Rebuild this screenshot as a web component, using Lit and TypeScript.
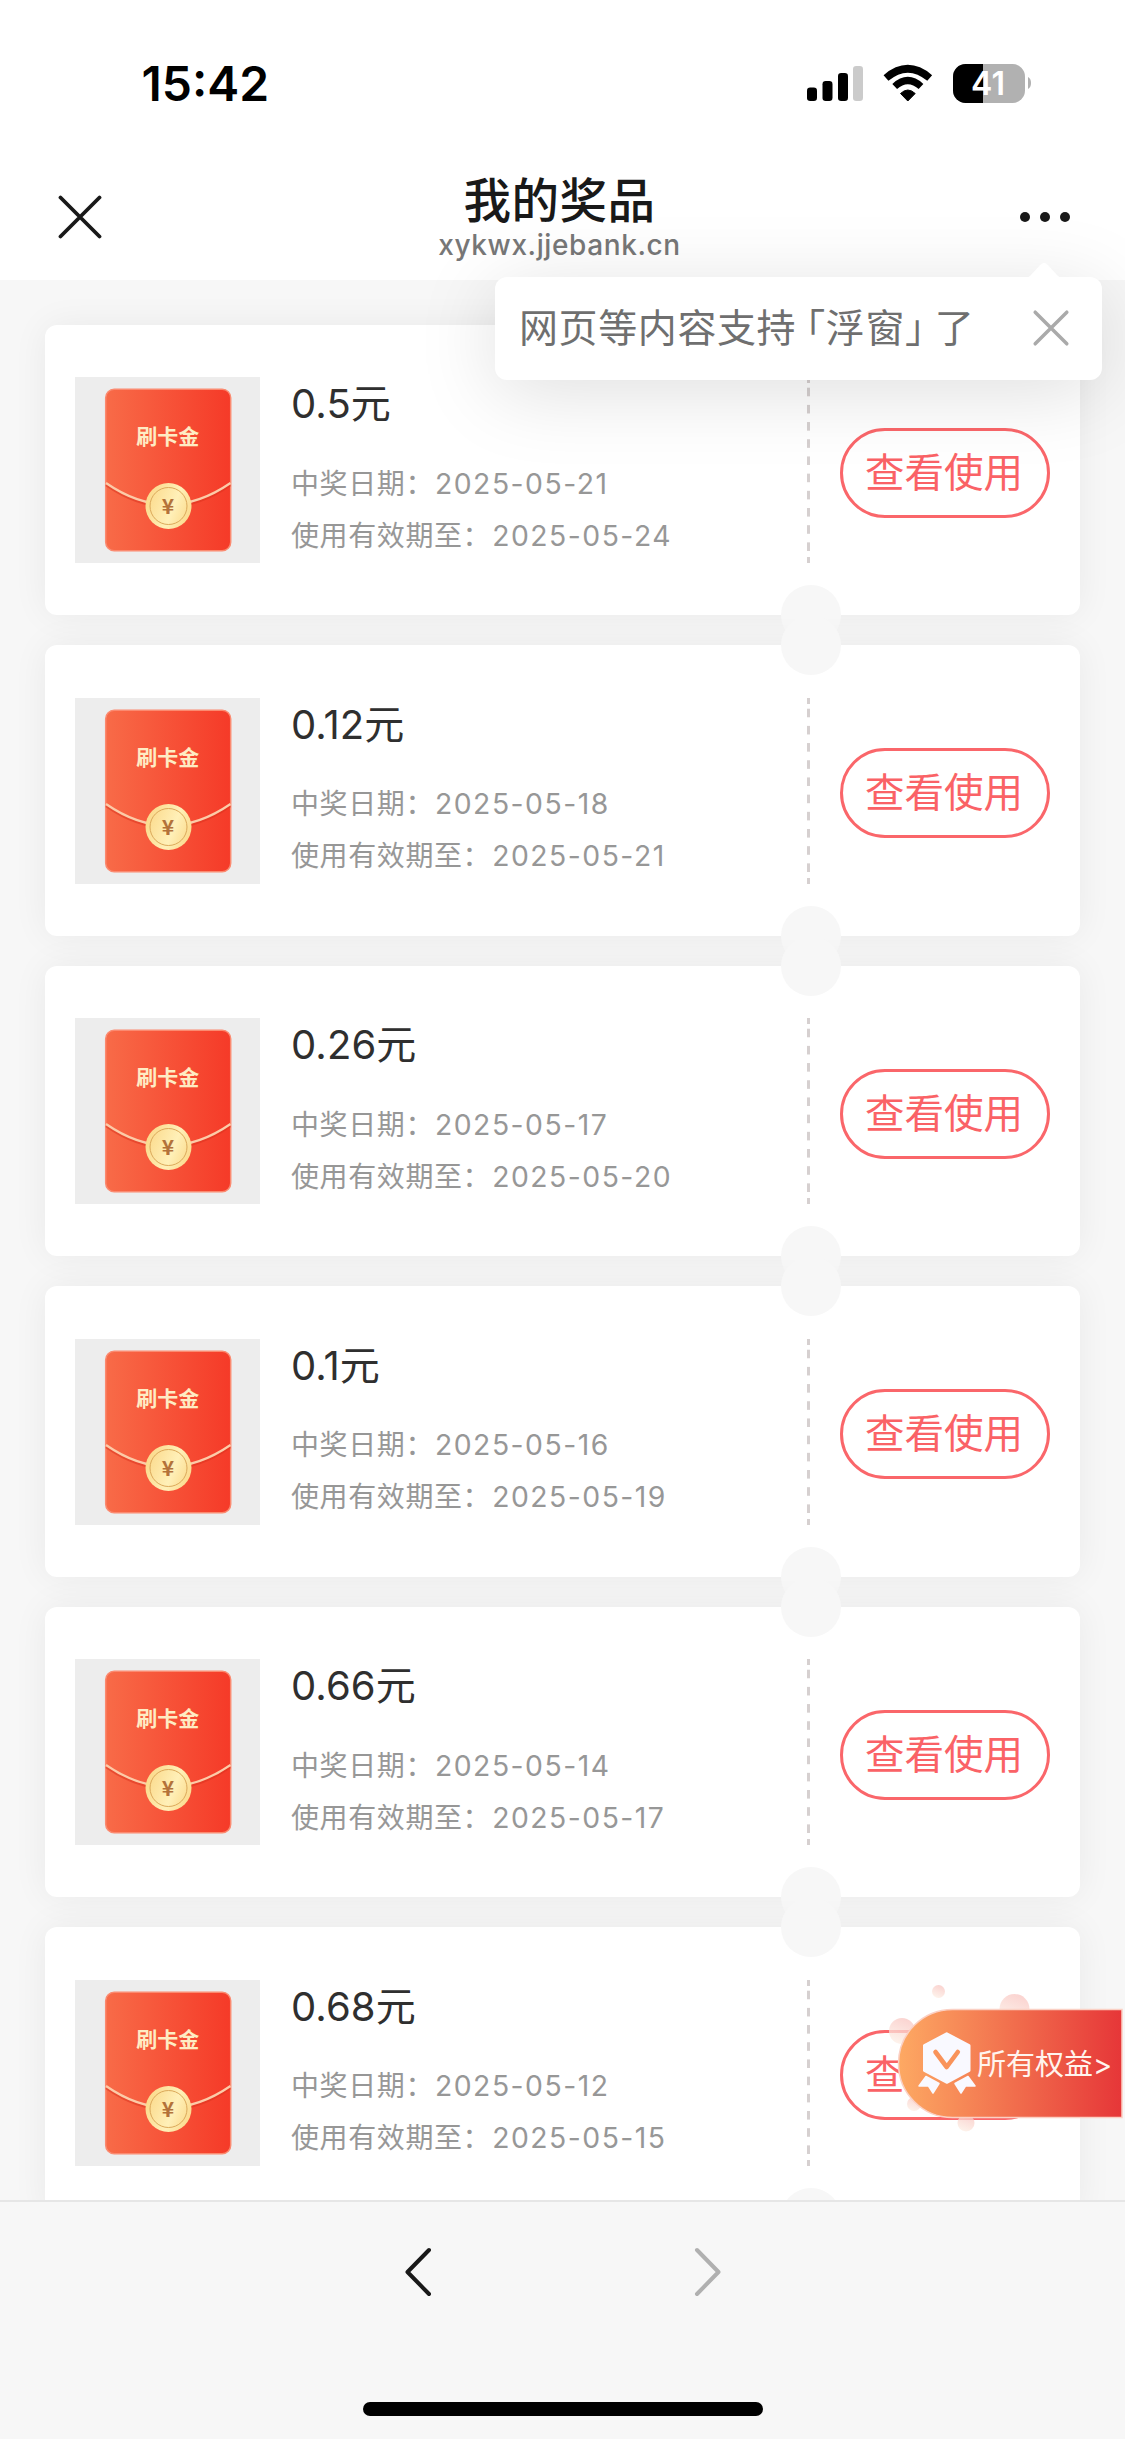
import { LitElement, html, css, svg } from "lit";
import { customElement, property } from "lit/decorators.js";

interface Prize {
  amount: string;
  won: string;
  expires: string;
}

const PRIZES: Prize[] = [
  { amount: "0.5元", won: "2025-05-21", expires: "2025-05-24" },
  { amount: "0.12元", won: "2025-05-18", expires: "2025-05-21" },
  { amount: "0.26元", won: "2025-05-17", expires: "2025-05-20" },
  { amount: "0.1元", won: "2025-05-16", expires: "2025-05-19" },
  { amount: "0.66元", won: "2025-05-14", expires: "2025-05-17" },
  { amount: "0.68元", won: "2025-05-12", expires: "2025-05-15" },
];

@customElement("status-bar")
class StatusBar extends LitElement {
  static styles = css`
    :host { display: flex; justify-content: space-between; height: 136px; padding: 0 92px 0 141.500px; box-sizing: border-box; }
    .time { font-size: 48px; line-height: 60px; font-weight: 600; padding-top: 54px; color: #000; }
    .icons { display: block; margin-top: 60px; }
    .level { font: 600 32px/1 Inter, sans-serif; }
  `;
  render() {
    return html`
      <div class="time">15:42</div>
      <svg class="icons" width="226" height="48" viewBox="807 60 226 48">
        <rect x="807" y="87.5" width="10" height="13.5" rx="3.2" />
        <rect x="822.5" y="81" width="10" height="20" rx="3.2" />
        <rect x="838" y="73" width="10" height="28" rx="3.2" />
        <rect x="853" y="66" width="10" height="35" rx="3.2" fill="#cbcbcb" />
        <path d="M907.800 101 L900.500 93.500 Q907.800 86.500 915.200 93.500 Z" stroke="#000" stroke-linejoin="round" stroke-width="1" />
        <path d="M894.700 86.500 Q907.800 74.500 921 86.500" fill="none" stroke="#000" stroke-width="7" />
        <path d="M886 78 Q907.800 59.500 929.700 78" fill="none" stroke="#000" stroke-width="7.500" />
        <defs><clipPath id="cell"><rect x="953" y="64" width="72" height="39" rx="12.500" /></clipPath></defs>
        <g clip-path="url(#cell)">
          <rect x="953" y="64" width="72" height="39" fill="#b1b1b1" />
          <rect x="953" y="64" width="30" height="39" />
        </g>
        <path d="M1028 77 Q1031 78.500 1031 83 Q1031 87.500 1028 89 Z" fill="#b1b1b1" />
        <text class="level" x="988" y="95.300" text-anchor="middle" fill="#fff">41</text>
      </svg>
    `;
  }
}

@customElement("title-bar")
class TitleBar extends LitElement {
  static styles = css`
    :host { display: grid; grid-template-columns: 160px 1fr 160px; align-items: start; height: 144px; }
    .close { padding: 59px 0 0 57px; }
    .more { padding: 74.500px 0 0 54px; }
    svg { display: block; }
    .center { display: flex; flex-direction: column; align-items: center; margin-left: -6px; padding-top: 32.500px; }
    .title { font-size: 47.500px; line-height: 64px; font-weight: 500; letter-spacing: 0.5px; color: #191919; }
    .domain { margin-top: -5px; font-size: 28px; line-height: 34px; font-weight: 450; letter-spacing: 0.600px; color: #777; }
  `;
  render() {
    return html`
      <div class="close">
        <svg width="46" height="44" viewBox="0 0 46 44"><path d="M3.500 2.500L42.500 41.500M42.500 2.500L3.500 41.500" stroke="#191919" stroke-width="3.800" stroke-linecap="round" /></svg>
      </div>
      <div class="center">
        <div class="title">我的奖品</div>
        <div class="domain">xykwx.jjebank.cn</div>
      </div>
      <div class="more">
        <svg width="52" height="12" viewBox="0 0 52 12" fill="#191919"><circle cx="6" cy="6" r="5" /><circle cx="26" cy="6" r="5" /><circle cx="46" cy="6" r="5" /></svg>
      </div>
    `;
  }
}

@customElement("float-tip")
class FloatTip extends LitElement {
  static styles = css`
    :host { display: flex; align-items: center; justify-content: space-between; width: 607px; height: 102.500px; box-sizing: border-box; padding: 0 31.500px 0 24px; background: #fff; border-radius: 12px; box-shadow: 0 12px 80px rgba(0, 0, 0, 0.13); }
    .text { display: flex; font-size: 39px; letter-spacing: 0.6px; line-height: 60px; color: #6f6f6f; white-space: nowrap; }
    .open, .shut { font-feature-settings: "halt"; }
    .open { margin-left: 9.500px; }
    .shut { margin-right: 9.500px; }
    .arrow { position: absolute; top: -15px; right: 38px; }
    svg { display: block; }
  `;
  render() {
    return html`
      <svg class="arrow" width="40" height="17" viewBox="0 0 40 17"><path d="M0 17C5 16 7 13 16 3Q20 -1 24 3C33 13 35 16 40 17Z" fill="#fff" /></svg>
      <div class="text"><span>网页等内容支持</span><span class="open">「</span><span>浮窗</span><span class="shut">」</span><span>了</span></div>
      <svg width="40" height="40" viewBox="0 0 40 40"><path d="M4.200 4.200L35.800 35.800M35.800 4.200L4.200 35.800" stroke="#aaa" stroke-width="3.500" stroke-linecap="round" /></svg>
    `;
  }
}

@customElement("red-packet")
class RedPacket extends LitElement {
  static styles = css`
    :host { display: block; width: 185px; height: 186px; background: #ededed; }
    svg { display: block; }
    .label { font: 700 21px/1 "Noto Sans CJK SC", sans-serif; }
    .yen { font: 700 21px/1 "Noto Sans CJK SC", sans-serif; }
  `;
  render() {
    return html`
      <svg width="185" height="186" viewBox="0 0 185 186">
        <defs>
          <linearGradient id="body"><stop offset="0" stop-color="#f86b48" /><stop offset="1" stop-color="#f53a28" /></linearGradient>
          <linearGradient id="coin" x1="0" y1="0.3" x2="1" y2="0.7"><stop offset="0" stop-color="#fbd98a" /><stop offset="0.600" stop-color="#fff0b8" /><stop offset="1" stop-color="#fbd98a" /></linearGradient>
        </defs>
        <rect x="30.700" y="12.200" width="125" height="161.500" rx="8.500" fill="url(#body)" stroke="#fb8a70" stroke-width="1.500" />
        <path d="M31 108Q93 151 155.500 108" fill="none" stroke="#d92f1c" stroke-opacity=".5" stroke-width="2.500" />
        <path d="M31 106Q93 149 155.500 106" fill="none" stroke="#fccba8" stroke-width="2.200" />
        <circle cx="93.500" cy="129" r="23" fill="url(#coin)" />
        <circle cx="93.500" cy="129" r="18.500" fill="none" stroke="#dba95a" stroke-width="1" />
        <text class="yen" x="93" y="137" text-anchor="middle" fill="#b3723a">¥</text>
        <text class="label" x="92.700" y="66.500" text-anchor="middle" fill="#feecc4">刷卡金</text>
      </svg>
    `;
  }
}

@customElement("prize-card")
class PrizeCard extends LitElement {
  @property({ attribute: false }) prize!: Prize;
  static styles = css`
    :host { display: flex; position: relative; height: 290.500px; box-sizing: border-box; padding: 52.500px 30px 0 30px; background: #fff; border-radius: 12px; box-shadow: 0 0 36px rgba(0, 0, 0, 0.06); }
    .notch { position: absolute; width: 60px; height: 60px; left: 735.500px; border-radius: 50%; background: #f7f7f7; }
    .top { top: -30px; }
    .bottom { bottom: -30px; }
    .info { flex: 1; padding-left: 31px; white-space: nowrap; }
    .amount { font-size: 40px; line-height: 54px; color: #2f2f2f; letter-spacing: 0.1px; }
    .lines { padding-top: 26.500px; font-size: 28px; line-height: 52px; color: #979797; letter-spacing: 0.6px; }
    .date { margin-left: 1px; font-size: 28.300px; letter-spacing: 1.500px; }
    .split {
      width: 3px;
      height: 186px;
      background:
        linear-gradient(#d6d0d0 0 5.600px, transparent 5.600px 180px, #d6d0d0 180px) no-repeat,
        linear-gradient(#d6d0d0 0 8.600px, transparent 8.600px) 0 10.700px / 3px 17.200px repeat-y;
    }
    .action { margin: 50.500px 0 0 30.500px; width: 210px; height: 90px; box-sizing: border-box; border: 3px solid #fa666a; border-radius: 45px; padding-right: 2px; color: #fa6266; font-size: 39.500px; line-height: 85px; text-align: center; white-space: nowrap; }
  `;
  render() {
    return html`
      <red-packet></red-packet>
      <div class="info">
        <div class="amount">${this.prize.amount}</div>
        <div class="lines">
          <div>中奖日期：<span class="date">${this.prize.won}</span></div>
          <div>使用有效期至：<span class="date">${this.prize.expires}</span></div>
        </div>
      </div>
      <div class="split"></div>
      <div class="action">查看使用</div>
      <span class="notch top"></span>
      <span class="notch bottom"></span>
    `;
  }
}

@customElement("rights-badge")
class RightsBadge extends LitElement {
  static styles = css`
    :host { display: block; width: 240px; height: 160px; }
    svg { display: block; }
    .label { font: 400 29px/1 Inter, "Noto Sans CJK SC", sans-serif; }
  `;
  render() {
    const bubble = (x: number, y: number, r: number) => svg`<circle cx=${x} cy=${y} r=${r} fill="url(#bubble)" opacity="0.75" />`;
    return html`
      <svg width="240" height="160" viewBox="885 1975 240 160">
        <defs>
          <linearGradient id="pill"><stop offset="0" stop-color="#fda963" /><stop offset="1" stop-color="#e63638" /></linearGradient>
          <linearGradient id="bubble" x1="0.700" y1="0" x2="0.300" y2="1"><stop offset="0" stop-color="#f9c4c0" /><stop offset="1" stop-color="#fdf0e6" /></linearGradient>
        </defs>
        ${bubble(938.5, 1991.5, 6.5)}${bubble(1014.5, 2009, 15)}${bubble(902, 2031, 13)}${bubble(914, 2104, 7)}${bubble(966, 2123, 8.5)}
        <path d="M1122 2009.500H952.500a54 54 0 0 0 0 108H1122Z" fill="url(#pill)" stroke="#fbd0c4" stroke-width="1.500" />
        <g fill="#f9f9ff" stroke="#f9f9ff" stroke-width="3" stroke-linejoin="round">
          <path d="M946.700 2033.800L969 2045.500V2070.500L946.700 2082.300L924.500 2070.500V2045.500Z" />
          <path d="M926 2076.500L939 2083.500L933 2093L928.500 2086L919 2086Z" stroke-width="1.500" />
          <path d="M968 2076.500L955 2083.500L961 2093L965.500 2086L975 2086Z" stroke-width="1.500" />
        </g>
        <path d="M935.500 2052L946.700 2067L957.800 2052" fill="none" stroke="#f9935a" stroke-width="4.600" stroke-linecap="round" stroke-linejoin="round" />
        <text class="label" x="977" y="2074.500" fill="#fff4ee">所有权益&gt;</text>
      </svg>
    `;
  }
}

@customElement("bottom-nav")
class BottomNav extends LitElement {
  static styles = css`
    :host { display: flex; flex-direction: column; align-items: center; justify-content: space-between; height: 239px; box-sizing: border-box; padding: 44.500px 0 23px; border-top: 2px solid #e6e6e6; background: #f7f7f7; }
    .arrows { display: flex; gap: 262px; }
    .home { width: 400px; height: 14px; border-radius: 7px; background: #000; }
    svg { display: block; }
  `;
  render() {
    return html`
      <div class="arrows">
        <svg width="28" height="50" viewBox="0 0 28 50"><path d="M25 3L3.500 25L25 47" fill="none" stroke="#191919" stroke-width="4" stroke-linejoin="round" stroke-linecap="round" /></svg>
        <svg width="28" height="50" viewBox="0 0 28 50"><path d="M3 3L24.500 25L3 47" fill="none" stroke="#b0b0b0" stroke-width="4" stroke-linejoin="round" stroke-linecap="round" /></svg>
      </div>
      <div class="home"></div>
    `;
  }
}

@customElement("app-root")
class AppRoot extends LitElement {
  static styles = css`
    :host { display: flex; flex-direction: column; position: relative; width: 1125px; height: 2439px; overflow: hidden; background: #fff; font-family: Inter, "Noto Sans CJK SC", sans-serif; }
    .list { flex: 1; min-height: 0; overflow: hidden; box-sizing: border-box; padding: 44.600px 45px 0; display: flex; flex-direction: column; gap: 30px; background: #f7f7f7; }
    prize-card { flex: none; }
    float-tip { position: absolute; left: 495px; top: 277px; }
    rights-badge { position: absolute; left: 885px; top: 1975px; }
  `;
  render() {
    return html`
      <status-bar></status-bar>
      <title-bar></title-bar>
      <div class="list">${PRIZES.map((p) => html`<prize-card .prize=${p}></prize-card>`)}</div>
      <bottom-nav></bottom-nav>
      <float-tip></float-tip>
      <rights-badge></rights-badge>
    `;
  }
}
